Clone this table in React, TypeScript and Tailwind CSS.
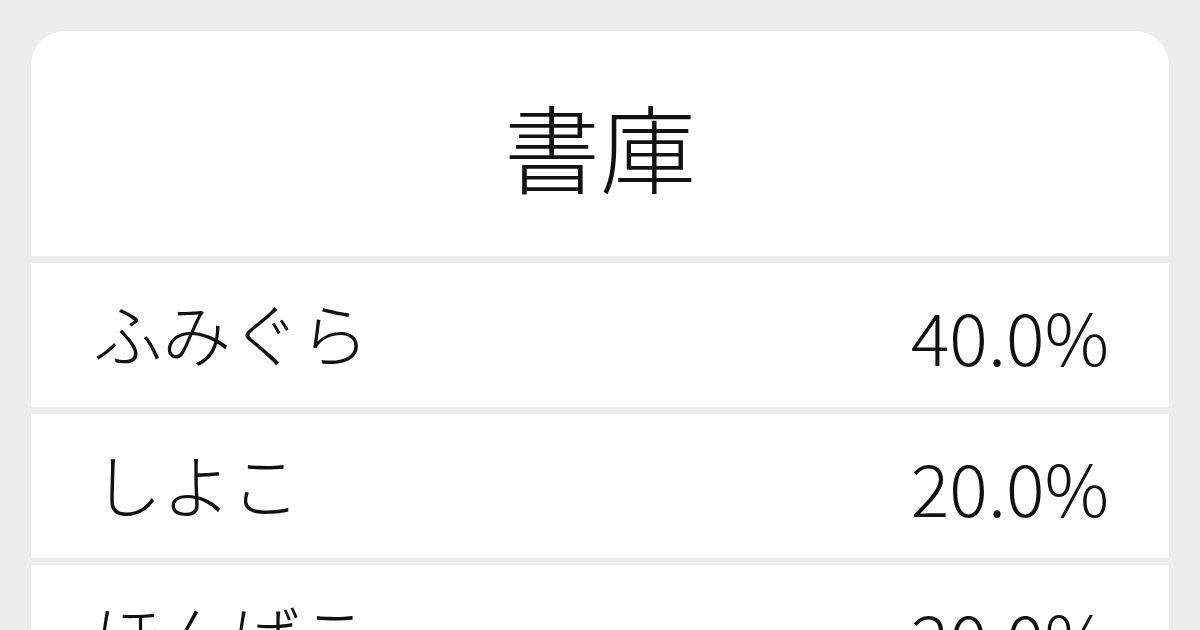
const rows = [
  { reading: 'ふみぐら', ratio: '40.0%' },
  { reading: 'しよこ', ratio: '20.0%' },
  { reading: 'ほんばこ', ratio: '20.0%' },
  { reading: 'ふみくら', ratio: '20.0%' },
]

export default function App() {
  return (
    <div
      className="h-[630px] w-[1200px] overflow-hidden bg-[#ececec] px-[31px] pt-[31px] text-[#111111]"
      style={{ fontFamily: '"Noto Sans CJK JP", "Noto Sans", sans-serif' }}
    >
      <div className="flex flex-col gap-[7px] overflow-hidden rounded-[34px]">
        <div className="flex h-[225px] items-center justify-center bg-white pt-[2px]">
          <h1 className="text-[96px] font-light leading-none">書庫</h1>
        </div>
        {rows.map((row) => (
          <div
            key={row.reading}
            className="flex h-[144px] items-center justify-between bg-white pl-[62px] pr-[60px] font-light leading-none"
          >
            <span className="mb-[6px] text-[69px]">{row.reading}</span>
            <span className="text-[72px]">{row.ratio}</span>
          </div>
        ))}
      </div>
    </div>
  )
}
